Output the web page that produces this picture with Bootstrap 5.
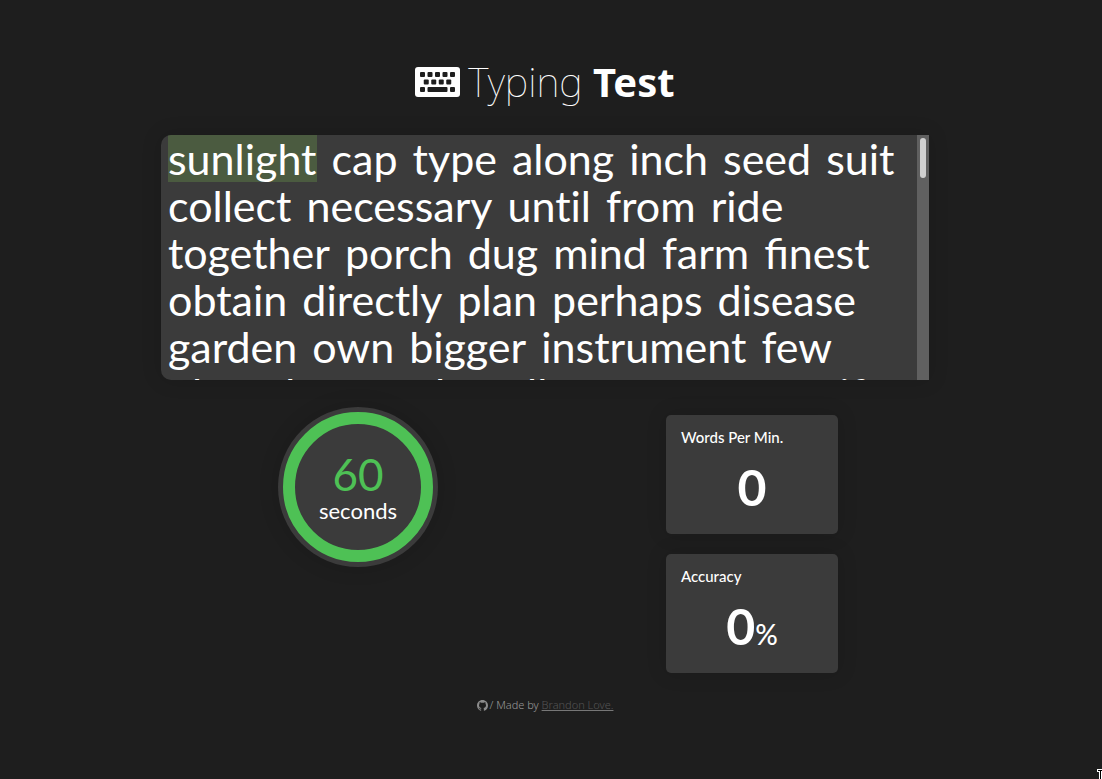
<!DOCTYPE html>
<html lang="en">
<head>
<meta charset="utf-8">
<meta name="viewport" content="width=device-width, initial-scale=1">
<title>Typing Test</title>
<link href="https://cdn.jsdelivr.net/npm/bootstrap@5.3.0/dist/css/bootstrap.min.css" rel="stylesheet">
<style>
  body { background: #1e1e1e; color: #fff; font-family: Lato, "Liberation Sans", sans-serif; padding-right: 12px; }
  .page { max-width: 768px; }
  .brand-title, .credits { font-family: "Noto Sans", "Open Sans", sans-serif; }
  .brand-title { font-size: 40px; line-height: 48px; font-weight: 100; padding-top: 58px; margin-bottom: 29px; }
  .brand-title strong { font-weight: 700; }
  .passage { height: 245px; background: #3b3b3b; border-radius: 10px 0 0 10px; box-shadow: 0 0 20px rgba(0,0,0,.15); }
  .words { font-size: 43px; line-height: 47px; padding: 0 16px 0 7px; column-gap: 15px; }
  .no-liga { font-variant-ligatures: none; }
  .current { background: #4b5b40; }
  .rail { width: 12px; padding: 3px; background: #606060; }
  .thumb { height: 40px; border-radius: 3px; background: #d0d0d0; }
  .results { padding: 27px 91px 0 117px; }
  .timer { width: 160px; height: 160px; background: #3b3b3b; padding: 5px; box-shadow: 0 0 20px rgba(0,0,0,.15); }
  .ring { border: 12px solid #4ec155; padding-top: 3px; }
  .count { font-size: 44px; line-height: 44px; color: #4ec155; }
  .unit { font-size: 22px; line-height: 30px; }
  .stats { width: 172px; gap: 20px; margin-top: 8px; }
  .stat { height: 119px; background: #3b3b3b; border-radius: 5px; padding: 12px 15px; box-shadow: 0 0 20px rgba(0,0,0,.15); }
  .stat h2 { font-size: 15px; line-height: 20px; font-weight: 500; margin: 0; }
  .reading { font-size: 50px; line-height: 60px; font-weight: 700; margin-top: 10px; }
  .reading small { font-size: 28px; font-weight: 500; }
  .credits { font-size: 11px; line-height: 16px; font-weight: 300; color: #999; margin-top: 24px; gap: 2px; }
  .credits a { color: #555; text-decoration-color: #777; }
  .pointer { right: 0; bottom: 0; }
</style>
</head>
<body>
<div class="page mx-auto">
  <header>
    <h1 class="brand-title d-flex justify-content-center align-items-center">
      <svg class="me-2" width="45" height="30" viewBox="0 0 45 30" aria-hidden="true">
        <rect width="45" height="30" rx="3" fill="#fff"/>
        <g fill="#1e1e1e">
          <rect x="5" y="5" width="5" height="5" rx="1"/><rect x="12.5" y="5" width="5" height="5" rx="1"/><rect x="20" y="5" width="5" height="5" rx="1"/><rect x="27.500" y="5" width="5" height="5" rx="1"/><rect x="35" y="5" width="5" height="5" rx="1"/>
          <rect x="8.750" y="12.500" width="5" height="5" rx="1"/><rect x="16.250" y="12.500" width="5" height="5" rx="1"/><rect x="23.750" y="12.500" width="5" height="5" rx="1"/><rect x="31.250" y="12.500" width="5" height="5" rx="1"/>
          <rect x="5" y="20" width="5" height="5" rx="1"/><rect x="12.500" y="20" width="20" height="5" rx="1"/><rect x="35" y="20" width="5" height="5" rx="1"/>
        </g>
      </svg>
      <span>Typing <strong>Test</strong></span>
    </h1>
  </header>
  <main>
    <section class="passage d-flex overflow-hidden">
      <div class="words flex-grow-1 d-flex flex-wrap align-content-start">
        <span class="current">sunlight</span> <span>cap</span> <span>type</span> <span>along</span> <span>inch</span> <span>seed</span> <span>suit</span>
        <span>collect</span> <span>necessary</span> <span class="no-liga">until</span> <span>from</span> <span>ride</span>
        <span>together</span> <span>porch</span> <span>dug</span> <span>mind</span> <span>farm</span> <span>finest</span>
        <span>obtain</span> <span>directly</span> <span>plan</span> <span>perhaps</span> <span>disease</span>
        <span>garden</span> <span>own</span> <span>bigger</span> <span>instrument</span> <span>few</span>
        <span>plane</span> <span>has</span> <span>made</span> <span>yellow</span> <span>means</span> <span>son</span> <span>if</span>
      </div>
      <div class="rail flex-shrink-0"><div class="thumb"></div></div>
    </section>
    <section class="results d-flex justify-content-between align-items-start">
      <div class="timer rounded-circle flex-shrink-0">
        <div class="ring rounded-circle h-100 d-flex flex-column align-items-center justify-content-center">
          <div class="count">60</div>
          <div class="unit">seconds</div>
        </div>
      </div>
      <div class="stats d-flex flex-column">
        <div class="stat"><h2>Words Per Min.</h2><div class="reading text-center">0</div></div>
        <div class="stat"><h2>Accuracy</h2><div class="reading text-center">0<small>%</small></div></div>
      </div>
    </section>
  </main>
  <footer class="credits d-flex justify-content-center align-items-center">
    <svg width="11" height="11" viewBox="0 0 16 16" fill="#8c8c8c" aria-hidden="true"><path d="M8 0C3.580 0 0 3.580 0 8c0 3.540 2.290 6.530 5.470 7.590.4.070.55-.17.55-.38 0-.19-.01-.82-.01-1.490-2.010.37-2.530-.49-2.690-.94-.09-.23-.48-.94-.82-1.130-.28-.15-.68-.52-.01-.53.63-.01 1.080.58 1.230.82.72 1.210 1.870.87 2.330.66.070-.52.280-.87.510-1.070-1.780-.2-3.640-.89-3.640-3.950 0-.87.310-1.590.82-2.150-.08-.2-.36-1.020.08-2.120 0 0 .67-.21 2.200.82a7.600 7.600 0 0 1 4 0c1.530-1.040 2.200-.82 2.200-.82.44 1.100.16 1.920.08 2.120.51.56.82 1.270.82 2.150 0 3.070-1.870 3.750-3.650 3.950.29.25.54.73.54 1.480 0 1.070-.01 1.930-.01 2.200 0 .21.15.46.55.38A8 8 0 0 0 16 8c0-4.420-3.580-8-8-8z"/></svg>
    <span>/ Made by <a href="#">Brandon Love.</a></span>
  </footer>
</div>
<svg class="pointer position-fixed" width="5" height="10" viewBox="0 0 5 10" aria-hidden="true"><path d="M0 0h5v10H2V3H0z" fill="#fff"/><path d="M1 1h4v1H4v8H3V2H1z" fill="#000"/></svg>
<script src="https://cdn.jsdelivr.net/npm/bootstrap@5.3.0/dist/js/bootstrap.bundle.min.js"></script>
</body>
</html>
